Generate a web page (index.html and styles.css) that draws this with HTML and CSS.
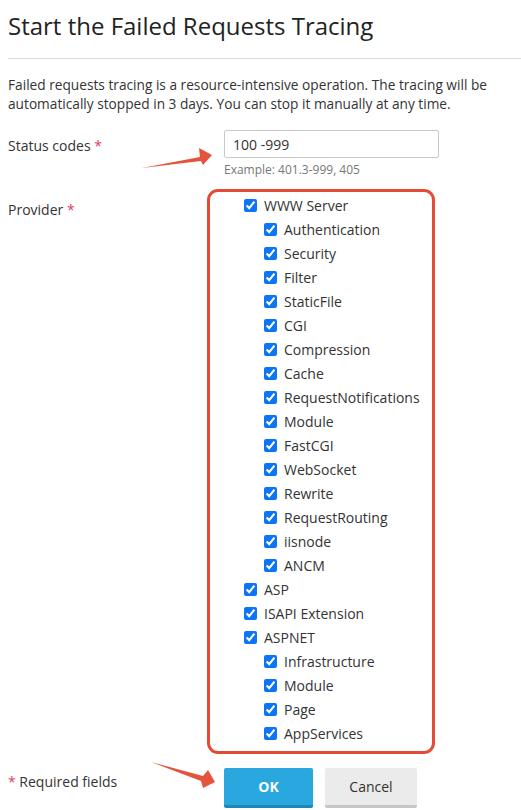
FILE: index.html
```html
<!DOCTYPE html>
<html lang="en">
<head>
<meta charset="utf-8">
<title>Start the Failed Requests Tracing</title>
<link rel="stylesheet" href="styles.css">
</head>
<body>
<div class="dialog">
  <h1 class="title">Start the Failed Requests Tracing</h1>
  <hr class="divider">
  <p class="intro">Failed requests tracing is a resource-intensive operation. The tracing will be automatically stopped in 3 days. You can stop it manually at any time.</p>

  <div class="form">
    <div class="label label-status">Status codes <span class="req">*</span></div>
    <div class="field">
      <input class="text-input" type="text" value="100 -999">
      <div class="hint">Example: 401.3-999, 405</div>
    </div>

    <div class="label label-provider">Provider <span class="req">*</span></div>
    <div class="field">
      <div class="providers">
        <label class="item lvl1"><input type="checkbox" checked><span>WWW Server</span></label>
        <label class="item lvl2"><input type="checkbox" checked><span>Authentication</span></label>
        <label class="item lvl2"><input type="checkbox" checked><span>Security</span></label>
        <label class="item lvl2"><input type="checkbox" checked><span>Filter</span></label>
        <label class="item lvl2"><input type="checkbox" checked><span>StaticFile</span></label>
        <label class="item lvl2"><input type="checkbox" checked><span>CGI</span></label>
        <label class="item lvl2"><input type="checkbox" checked><span>Compression</span></label>
        <label class="item lvl2"><input type="checkbox" checked><span>Cache</span></label>
        <label class="item lvl2"><input type="checkbox" checked><span>RequestNotifications</span></label>
        <label class="item lvl2"><input type="checkbox" checked><span>Module</span></label>
        <label class="item lvl2"><input type="checkbox" checked><span>FastCGI</span></label>
        <label class="item lvl2"><input type="checkbox" checked><span>WebSocket</span></label>
        <label class="item lvl2"><input type="checkbox" checked><span>Rewrite</span></label>
        <label class="item lvl2"><input type="checkbox" checked><span>RequestRouting</span></label>
        <label class="item lvl2"><input type="checkbox" checked><span>iisnode</span></label>
        <label class="item lvl2"><input type="checkbox" checked><span>ANCM</span></label>
        <label class="item lvl1"><input type="checkbox" checked><span>ASP</span></label>
        <label class="item lvl1"><input type="checkbox" checked><span>ISAPI Extension</span></label>
        <label class="item lvl1"><input type="checkbox" checked><span>ASPNET</span></label>
        <label class="item lvl2"><input type="checkbox" checked><span>Infrastructure</span></label>
        <label class="item lvl2"><input type="checkbox" checked><span>Module</span></label>
        <label class="item lvl2"><input type="checkbox" checked><span>Page</span></label>
        <label class="item lvl2"><input type="checkbox" checked><span>AppServices</span></label>
      </div>
    </div>

    <div class="label label-footer"><span class="req">*</span> Required fields</div>
    <div class="buttons">
      <button class="btn btn-ok" type="button">OK</button>
      <button class="btn btn-cancel" type="button">Cancel</button>
    </div>
  </div>

  <svg class="arrow" width="521" height="810" viewBox="0 0 521 810" aria-hidden="true">
    <polygon points="142,168 200,157 199,148 212,155 203,165 201,161" fill="#e5533d"/>
    <polygon points="151,762 203,776 208,770 215,782 203,788 201,781" fill="#e5533d"/>
  </svg>
</div>
</body>
</html>
```

FILE: styles.css
```css
* { box-sizing: border-box; }

html, body {
  margin: 0;
  padding: 0;
  background: #ffffff;
}

body {
  font-family: "Open Sans", "Liberation Sans", sans-serif;
  color: #333333;
}

.dialog {
  position: relative;
  width: 521px;
  height: 810px;
  padding-left: 8px;
  overflow: hidden;
}

.title {
  margin: 0;
  padding-top: 10px;
  font-size: 24px;
  line-height: 32px;
  font-weight: 400;
  color: #222222;
}

.divider {
  margin: 16px 0 0 0;
  border: 0;
  border-top: 1px solid #d9d9e3;
  height: 0;
}

.intro {
  margin: 16px 0 0 0;
  font-size: 13.7px;
  line-height: 19px;
  color: #333333;
}

.form {
  display: grid;
  grid-template-columns: 216px 1fr;
  margin-top: 17px;
}

.label {
  font-size: 14px;
  line-height: 20px;
  color: #333333;
}

.label-status { padding-top: 6px; }
.label-provider { padding-top: 22px; }
.label-footer { padding-top: 18px; }

.req { color: #e0405a; }

.text-input {
  display: block;
  width: 215px;
  height: 28px;
  margin: 0;
  padding: 0 8px;
  border: 1px solid #c8c8c8;
  border-radius: 2px;
  font-family: "Open Sans", "Liberation Sans", sans-serif;
  font-size: 14px;
  color: #333333;
  outline: none;
}

.hint {
  margin-top: 4px;
  font-size: 12px;
  line-height: 16px;
  color: #777777;
}

.providers {
  margin-top: 11px;
  margin-left: -17px;
  width: 228px;
  border: 3px solid #e34b37;
  border-radius: 11px;
  padding: 1px 0 6px 0;
}

.item {
  display: flex;
  align-items: center;
  gap: 7px;
  height: 24px;
  font-size: 14px;
  color: #333333;
}

.item input {
  width: 13px;
  height: 13px;
  margin: 0;
  accent-color: #0b75f5;
}

.lvl1 { padding-left: 34px; }
.lvl2 { padding-left: 54px; }

.buttons {
  display: flex;
  gap: 12px;
  margin-top: 14px;
}

.btn {
  height: 40px;
  margin: 0;
  border: 0;
  border-radius: 2px;
  font-family: "Open Sans", "Liberation Sans", sans-serif;
  font-size: 14px;
  cursor: pointer;
}

.btn-ok {
  width: 89px;
  background: #29a8df;
  border-bottom: 3px solid #1d87b8;
  color: #ffffff;
  font-weight: 700;
}

.btn-cancel {
  width: 92px;
  background: #ebebeb;
  border-bottom: 3px solid #c6c6c6;
  color: #333333;
}

.arrow {
  position: absolute;
  left: 0;
  top: 0;
  pointer-events: none;
}
```
